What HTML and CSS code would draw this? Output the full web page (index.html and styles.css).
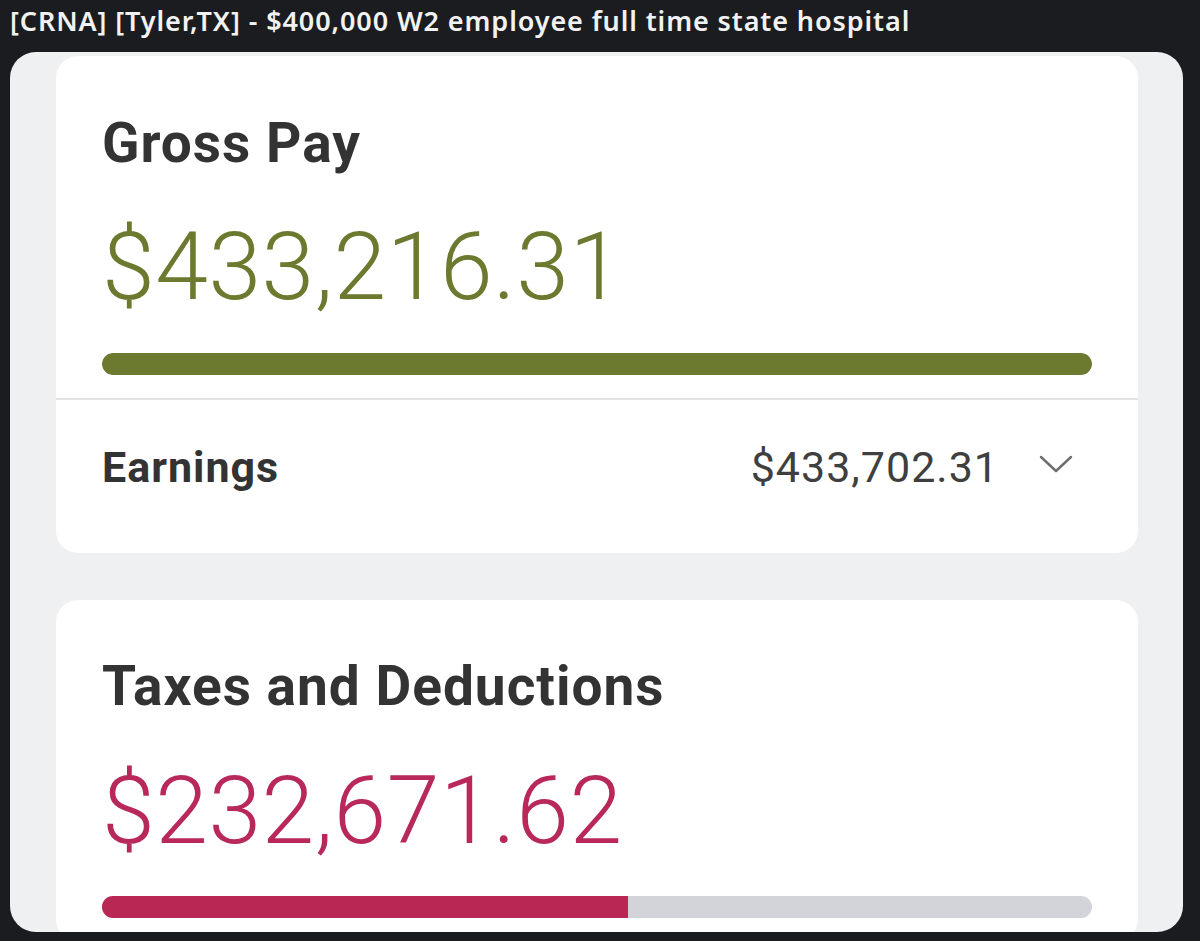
FILE: index.html
```html
<!DOCTYPE html>
<html lang="en">
<head>
<meta charset="utf-8">
<title>[CRNA] [Tyler,TX] - $400,000 W2 employee full time state hospital</title>
<link rel="stylesheet" href="styles.css">
</head>
<body>
  <header class="post-title">[CRNA] [Tyler,TX] - $400,000 W2 employee full time state hospital</header>
  <main class="shot">
    <section class="card">
      <div class="card-top">
        <h2 class="card-heading">Gross Pay</h2>
        <div class="amount amount-olive">$433,216.31</div>
        <div class="bar"><div class="bar-fill fill-olive" style="width:100%"></div></div>
      </div>
      <div class="row">
        <span class="row-label">Earnings</span>
        <span class="row-value">$433,702.31</span>
        <svg class="chevron" width="34" height="20" viewBox="0 0 34 20" aria-hidden="true">
          <path d="M2 3 L17 17 L32 3" fill="none" stroke="#6e6e6e" stroke-width="2.4" stroke-linecap="round" stroke-linejoin="round"/>
        </svg>
      </div>
    </section>
    <section class="card card-second">
      <div class="card-top">
        <h2 class="card-heading">Taxes and Deductions</h2>
        <div class="amount amount-red">$232,671.62</div>
        <div class="bar"><div class="bar-fill fill-red" style="width:53.1%"></div></div>
      </div>
    </section>
  </main>
</body>
</html>
```
FILE: styles.css
```css
html, body {
  margin: 0;
  padding: 0;
}
body {
  background: #1a1c1f;
  width: 1200px;
  height: 941px;
  overflow: hidden;
}
.post-title {
  height: 52px;
  padding-left: 10px;
  box-sizing: border-box;
  font-family: "Noto Sans", "Open Sans", sans-serif;
  font-weight: 600;
  font-size: 27px;
  letter-spacing: 0.9px;
  line-height: 42px;
  color: #f2f2f2;
  white-space: nowrap;
}
.shot {
  margin-left: 10px;
  width: 1173px;
  height: 880px;
  border-radius: 26px;
  background: #eff0f2;
  overflow: hidden;
  box-sizing: border-box;
  padding: 4px 0 0 46px;
  display: flex;
  flex-direction: column;
  gap: 47px;
}
.card {
  width: 1082px;
  background: #ffffff;
  border-radius: 22px;
  flex-shrink: 0;
  font-family: Roboto, "Liberation Sans", sans-serif;
}
.card-top {
  padding: 57px 46px 23px 46px;
  border-bottom: 2px solid #e3e3e5;
}
.card-second .card-top {
  padding-top: 56px;
  border-bottom: none;
}
.card-heading {
  margin: 0;
  font-size: 55px;
  letter-spacing: 1px;
  line-height: 60px;
  font-weight: 700;
  color: #333333;
}
.amount {
  margin-top: 44px;
  font-size: 95px;
  letter-spacing: 0.5px;
  line-height: 100px;
  font-weight: 300;
}
.card-second .amount {
  margin-top: 45px;
}
.amount-olive { color: #6b7a2f; }
.amount-red { color: #b8285a; }
.bar {
  margin-top: 36px;
  height: 22px;
  border-radius: 11px;
  background: #d2d4d9;
  overflow: hidden;
}
.card-second .bar {
  margin-top: 35px;
}
.bar-fill {
  height: 100%;
}
.fill-olive { background: #6b7a2e; border-radius: 11px; }
.fill-red { background: #b92754; }
.row {
  display: flex;
  align-items: center;
  padding: 42px 65px 61px 46px;
  height: 50px;
}
.row-label {
  font-size: 43px;
  letter-spacing: 1px;
  line-height: 50px;
  font-weight: 700;
  color: #333333;
  flex: 1;
}
.row-value {
  font-size: 43px;
  letter-spacing: 1px;
  line-height: 50px;
  font-weight: 400;
  color: #3f3f3f;
}
.chevron {
  margin-left: 40px;
  margin-top: -6px;
}
```
